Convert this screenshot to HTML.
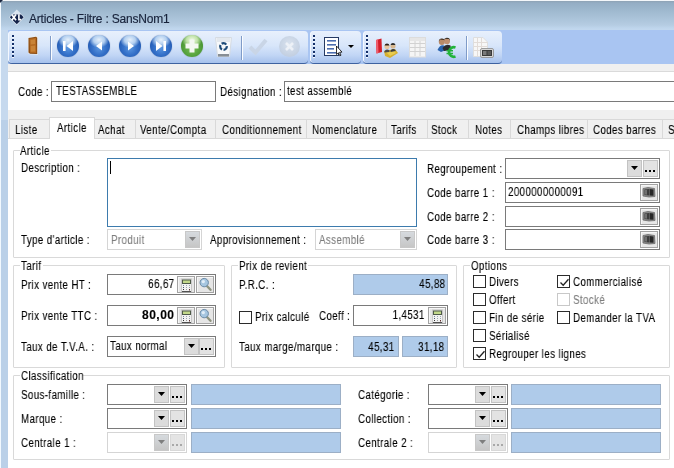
<!DOCTYPE html><html><head><meta charset="utf-8"><style>
*{box-sizing:border-box;margin:0;padding:0}
html,body{width:674px;height:468px;overflow:hidden;background:#f0f0f0;font-family:"Liberation Sans",sans-serif;font-size:12px;color:#000}
.a{position:absolute}
.t{position:absolute;line-height:14px;white-space:nowrap;transform:scaleX(.81);letter-spacing:.5px;transform-origin:0 0;will-change:transform;-webkit-text-stroke:0.12px currentColor}
.tr{transform-origin:100% 0}
.tc{transform-origin:50% 0}
.grp{position:absolute;top:31px;height:33px;border-radius:4px;background:linear-gradient(#e8f0fc 0%,#d8e6fa 45%,#c2d6f5 75%,#a6c1ec 100%);border-bottom:1px solid #3e62a0;box-shadow:inset 1px 0 0 #f4f8ff}
.grip{position:absolute;top:4px;width:2px;height:23px;background:repeating-linear-gradient(#14306a 0 2px,#f4f8ff 2px 3px,transparent 3px 4px)}
.sep{position:absolute;top:5px;width:2px;height:24px;border-left:1px solid #7f9bc8;border-right:1px solid #fbfdff}
.circ{position:absolute;top:4px;width:22px;height:22px;border-radius:50%;background:radial-gradient(ellipse 62% 48% at 50% 22%,#e6f0fb 0%,#b4d0f0 40%,rgba(120,170,230,0) 75%),radial-gradient(circle at 50% 60%,#5a96e0 0%,#3470c8 40%,#2057b0 75%,#1a4490 100%);box-shadow:0 0 1px rgba(20,50,110,.5)}
.circ svg{position:absolute;left:0;top:0}
.inp{position:absolute;background:#fff;border:1px solid #7a7a7a}
.tab{position:absolute;top:119px;height:19px;background:#f0f0f0;border:1px solid #d9d9d9;border-bottom:none}
.gb{position:absolute;border:1px solid #d9d9d9;border-radius:1px}
.gl{position:absolute;background:#fff;height:14px}
.blue{position:absolute;background:#afcbea;border:1px solid #9cafc6}
.ddb{position:absolute;background:#dcdcdc;border:1px solid #c3c3c3;width:15px;height:17px}
.ddb::after{content:"";position:absolute;left:3px;top:5px;width:7px;height:4px;background:#000;clip-path:polygon(0 0,100% 0,50% 100%)}
.dots{position:absolute;background:#e3e3e3;border:1px solid #c3c3c3;width:15px;height:17px}
.dots::after{content:"";position:absolute;left:1px;top:9px;width:2px;height:2px;background:#000;box-shadow:4px 0 #000,8px 0 #000}
.dis .ddb{background:linear-gradient(#d6dade,#c6c6c6);border-color:#c8c8c8}
.dis .ddb::after{background:#7e7e7e}
.dis .dots{background:#e4e4e4;border-color:#d8d8d8}
.dis .dots::after{background:#a8a8a8;box-shadow:4px 0 #a8a8a8,8px 0 #a8a8a8}
.cb{position:absolute;width:13px;height:13px;border:1px solid #2b2b2b;background:#fff}
.gray{color:#7d7d7d}
.btn{position:absolute;background:#e6e6e6;border:1px solid #a3a3a3;width:18px;height:17px;box-shadow:inset 1px 1px 0 #f6f6f6}
</style></head><body>
<div class="a" style="left:0;top:0;width:8px;height:468px;background:linear-gradient(#c6d9ee 0,#c6d9ee 120px,#bad0e8 120px);border-left:1px solid #f2f9ff"></div>
<div class="a" style="left:0;top:0;width:674px;height:30px;background:linear-gradient(#8fa2b4 0px,#94adc4 2px,#a2bcd2 12px,#b5cce2 24px,#bed5ec 27px,#c4d9ef 30px);border-top:1px solid #f4f7fa;border-left:1px solid #f2f9ff"></div>
<div class="a" style="left:0;top:0;width:3px;height:3px;background:linear-gradient(135deg,#1a2540 40%,transparent 60%)"></div>
<svg class="a" style="left:8px;top:9px" width="17" height="17" viewBox="0 0 17 17">
<path d="M8.8 0.5 L16.5 8.3 L8.8 16.3 L1 8.3Z" fill="#eef3fa" opacity=".75"/>
<path d="M1.8 8.3 L4.5 5.5 L13 5.5 L15.6 8.3 L8.8 15.2Z" fill="#14234a"/>
<path d="M3.8 5.6 L8 11.2 M8 5.6 L3.8 11.2" stroke="#fff" stroke-width="1.7"/>
<path d="M10.9 5.2 V10.6 H13.2" stroke="#fff" stroke-width="1.6" fill="none"/>
</svg>
<div class="a" style="left:29px;top:12px;line-height:14px;font-size:12px;letter-spacing:-0.2px;color:#17223a;white-space:nowrap;will-change:transform;-webkit-text-stroke:0.15px #17223a">Articles - Filtre : SansNom1</div>
<div class="a" style="left:8px;top:30px;width:666px;height:34px;background:#a9c5f2"></div>
<div class="grp" style="left:8px;width:300px">
<div class="grip" style="left:4px"></div>
<svg class="a" style="left:19px;top:4px" width="12" height="22" viewBox="0 0 12 22">
<path d="M1 2.5 L9.5 1 L11 2 L11 20 L3 19.5 L1 18Z" fill="#f4f0e8" opacity=".6"/>
<path d="M1.5 3 L9 1.8 L10.2 2.8 L10.2 19 L3 18.8 L1.5 17.5Z" fill="#8a4c14"/>
<path d="M2.5 3.8 L9 2.8 L9.3 18 L3 17.8Z" fill="#b56a22"/>
<path d="M3.5 5 L8 4.3 L8.2 9 L3.7 9.5Z M3.7 11 L8.2 10.5 L8.3 16.5 L3.8 16.7Z" fill="#c98438"/>
</svg>
<div class="sep" style="left:42px"></div>
<div class="circ" style="left:49px"><svg width="22" height="22"><rect x="6" y="6" width="2.6" height="10" fill="#fff"/><path d="M16 6 L16 16 L9.5 11Z" fill="#fff"/></svg></div>
<div class="circ" style="left:80px"><svg width="22" height="22"><path d="M14 6.5 L14 15.5 L8 11Z" fill="#fff"/></svg></div>
<div class="circ" style="left:111px"><svg width="22" height="22"><path d="M9 6.5 L9 15.5 L15 11Z" fill="#fff"/></svg></div>
<div class="circ" style="left:142px"><svg width="22" height="22"><path d="M6 6 L6 16 L12.5 11Z" fill="#fff"/><rect x="13.4" y="6" width="2.6" height="10" fill="#fff"/></svg></div>
<div class="circ" style="left:173px;background:radial-gradient(ellipse 62% 48% at 50% 22%,#eef8e6 0%,#c0e2a8 40%,rgba(140,200,100,0) 75%),radial-gradient(circle at 50% 60%,#7cc058 0%,#5aa640 40%,#44902f 75%,#357626 100%);box-shadow:0 0 1px rgba(30,80,20,.5)"><svg width="22" height="22"><path d="M8.5 4.5 H13.5 V8.5 H17.5 V13.5 H13.5 V17.5 H8.5 V13.5 H4.5 V8.5 H8.5Z" fill="#f4f7f2"/></svg></div>
<svg class="a" style="left:206px;top:5px" width="19" height="22" viewBox="0 0 19 22">
<path d="M1.5 1.5 H17.5 L15.5 20.5 H3.5Z" fill="#f7f9fb" stroke="#d5dbe2"/>
<path d="M2.5 2 H16.5 L16 6 H3Z" fill="#e3e8ee"/>
<circle cx="9.5" cy="10.5" r="3.3" fill="none" stroke="#1d4a78" stroke-width="2.2" stroke-dasharray="5 1.6"/>
<rect x="4" y="18" width="11" height="2.5" fill="#6a737c" opacity=".8"/>
</svg>
<div class="sep" style="left:233px"></div>
<svg class="a" style="left:240px;top:6px" width="20" height="20" viewBox="0 0 20 20"><path d="M2 10 L7.5 15.5 L18 3" fill="none" stroke="#c9d5e6" stroke-width="4"/></svg>
<div class="a" style="left:271px;top:5px;width:21px;height:21px;border-radius:50%;background:radial-gradient(circle at 50% 40%,#dae3ef,#bac8dc)"><svg width="21" height="21"><path d="M7 7 L14 14 M14 7 L7 14" stroke="#edf1f7" stroke-width="2.6"/></svg></div>
</div>
<div class="grp" style="left:310px;width:51px">
<div class="grip" style="left:3px"></div>
<svg class="a" style="left:13px;top:5px" width="22" height="22" viewBox="0 0 22 22">
<rect x="1.5" y="1.5" width="14" height="18" fill="#fff" stroke="#263a63"/>
<rect x="4" y="4" width="9" height="1.6" fill="#4c6eb0"/><rect x="4" y="8" width="9" height="1.6" fill="#4c6eb0"/>
<rect x="4" y="12" width="7" height="1.6" fill="#4c6eb0"/><rect x="4" y="16" width="9" height="1.6" fill="#4c6eb0"/>
<path d="M13.5 10 L13.5 18.5 L15.4 16.8 L16.8 19.8 L18 19.2 L16.6 16.3 L19 16.1Z" fill="#fff" stroke="#000" stroke-width=".8"/>
</svg>
<div class="a" style="left:38px;top:14px;border-left:3px solid transparent;border-right:3px solid transparent;border-top:3px solid #000"></div>
</div>
<div class="grp" style="left:363px;width:139px">
<div class="grip" style="left:3px"></div>
<svg class="a" style="left:11px;top:6px" width="24" height="22" viewBox="0 0 24 22">
<path d="M2 3 L7.5 1.5 L8 15 L2.5 16.5Z" fill="#d41e2a"/><path d="M2 3 L4 2.5 L4.5 16 L2.5 16.5Z" fill="#f06070"/>
<path d="M10 14 L21 12 L24 16 L16 21 L11 19Z" fill="#d6b030"/><path d="M12 15 L20 13.5 L22 16 L16 19Z" fill="#e8cc50"/>
<circle cx="13" cy="9.5" r="2.6" fill="#e6c6a0"/><path d="M10.5 8.5 A2.6 2.6 0 0 1 15.5 8.5Z" fill="#2e2018"/>
<circle cx="19" cy="9" r="2.6" fill="#d8b890"/><path d="M16.5 8 A2.6 2.6 0 0 1 21.5 8Z" fill="#2a2a2a"/>
<path d="M10.5 14 Q13 11.5 15.5 13.5 L15.5 15 L10.5 15.5Z" fill="#4a4a4a"/><path d="M16.5 13.5 Q19 11 21.5 13 L21.5 14 L16.5 15Z" fill="#3a3a3a"/>
</svg>
<svg class="a" style="left:45px;top:6px" width="19" height="21" viewBox="0 0 19 21"><rect x="1.5" y="0.5" width="16" height="19.5" fill="#f5f5f5" stroke="#dcdcdc"/><path d="M7 2 V19 M12 2 V19 M2 6.5 H17 M2 10.5 H17 M2 14.5 H17" stroke="#d2d2d2"/><rect x="2" y="1" width="15" height="3" fill="#e6e6e6"/></svg>
<svg class="a" style="left:72px;top:4px" width="24" height="26" viewBox="0 0 24 26">
<path d="M2.5 15 Q5 9 9 10.5 L11 15 L6 17Z" fill="#2a64b0"/>
<path d="M7.5 13 Q11 8 15.5 10.5 L16 15 L9 16Z" fill="#2c2c2c"/>
<circle cx="6.8" cy="7" r="3" fill="#b88a68"/><path d="M3.8 6.5 A3 3 0 0 1 9.8 6.5 L9 5 L5 4.5Z" fill="#3a2818"/>
<circle cx="12" cy="6.3" r="3" fill="#c09070"/><path d="M9 5.8 A3 3 0 0 1 15 5.8 L14 4 L10 3.8Z" fill="#2a2018"/>
<path d="M20.5 12.5 A4.8 4.8 0 1 0 20.5 21.5" fill="none" stroke="#22b33a" stroke-width="2.6"/>
<path d="M11.5 15.8 H18 M11.5 18.5 H18" stroke="#22b33a" stroke-width="1.5"/>
</svg>
<div class="sep" style="left:103px"></div>
<svg class="a" style="left:109px;top:5px" width="24" height="23" viewBox="0 0 24 23">
<path d="M1.5 1.5 H11 L15.5 6 V20.5 H1.5Z" fill="#f7f7f7" stroke="#dedede"/>
<path d="M2 6.5 H15 M2 10.5 H15 M2 14.5 H15 M5.5 2 V20 M9.5 2 V20" stroke="#e2dcd8"/>
<rect x="8.5" y="12.5" width="13" height="9" rx="1.5" fill="#d8d8d8" stroke="#8a8a8a" stroke-width=".8"/>
<rect x="10" y="14" width="10" height="6" fill="#3a3a3a"/><rect x="11" y="15" width="3.5" height="4" fill="#7a7a7a"/><rect x="15.5" y="15" width="3.5" height="4" fill="#5a5a5a"/>
</svg>
</div>
<div class="a" style="left:8px;top:64px;width:666px;height:8px;background:#f0f0f0;border-bottom:1px solid #dadada"></div>
<div class="a" style="left:8px;top:72px;width:666px;height:38px;background:#fff"></div>
<div class="t " style="left:18px;top:85px;">Code :</div>
<div class="inp" style="left:51px;top:81px;width:165px;height:21px"></div>
<div class="t " style="left:56px;top:84px;">TESTASSEMBLE</div>
<div class="t " style="left:220px;top:85px;">Désignation :</div>
<div class="inp" style="left:284px;top:81px;width:400px;height:21px"></div>
<div class="t " style="left:287px;top:84px;">test assemblé</div>
<div class="a" style="left:8px;top:110px;width:666px;height:30px;background:#f0f0f0"></div>
<div class="a" style="left:8px;top:138px;width:666px;height:330px;background:#fff;border-top:1px solid #d9d9d9"></div>
<div class="tab" style="left:9px;width:41px"></div>
<div class="t " style="left:15px;top:123px;">Liste</div>
<div class="tab" style="left:94px;width:42px"></div>
<div class="t " style="left:98px;top:123px;">Achat</div>
<div class="tab" style="left:135px;width:81px"></div>
<div class="t " style="left:140px;top:123px;">Vente/Compta</div>
<div class="tab" style="left:215px;width:92px"></div>
<div class="t " style="left:222px;top:123px;">Conditionnement</div>
<div class="tab" style="left:306px;width:81px"></div>
<div class="t " style="left:312px;top:123px;">Nomenclature</div>
<div class="tab" style="left:386px;width:42px"></div>
<div class="t " style="left:391px;top:123px;">Tarifs</div>
<div class="tab" style="left:427px;width:42px"></div>
<div class="t " style="left:431px;top:123px;">Stock</div>
<div class="tab" style="left:468px;width:43px"></div>
<div class="t " style="left:475px;top:123px;">Notes</div>
<div class="tab" style="left:510px;width:78px"></div>
<div class="t " style="left:517px;top:123px;">Champs libres</div>
<div class="tab" style="left:587px;width:76px"></div>
<div class="t " style="left:593px;top:123px;">Codes barres</div>
<div class="tab" style="left:662px;width:59px"></div>
<div class="t " style="left:668px;top:123px;">S</div>
<div class="a" style="left:49px;top:117px;width:46px;height:22px;background:#fff;border:1px solid #d9d9d9;border-bottom:none"></div>
<div class="t " style="left:57px;top:121px;">Article</div>
<div class="a" style="left:8px;top:139px;width:666px;height:329px;background:#fff"></div>
<div class="gb" style="left:13px;top:150px;width:657px;height:108px"></div>
<div class="gl" style="left:20px;top:144px;width:31px"></div>
<div class="t " style="left:20px;top:144px;">Article</div>
<div class="t " style="left:21px;top:161px;">Description :</div>
<div class="a" style="left:107px;top:158px;width:310px;height:69px;border:1px solid #3d7bad;background:#fff"></div>
<div class="a" style="left:110px;top:161px;width:1px;height:13px;background:#000"></div>
<div class="t " style="left:21px;top:233px;">Type d'article :</div>
<div class="a dis" style="left:107px;top:229px;width:95px;height:21px;border:1px solid #d5d5d5;background:#fff"><div class="ddb" style="left:77px;top:1px"></div></div>
<div class="t gray" style="left:111px;top:233px;">Produit</div>
<div class="t " style="left:210px;top:233px;">Approvisionnement :</div>
<div class="a dis" style="left:315px;top:229px;width:102px;height:21px;border:1px solid #d5d5d5;background:#fff"><div class="ddb" style="left:84px;top:1px"></div></div>
<div class="t gray" style="left:319px;top:233px;">Assemblé</div>
<div class="t " style="left:427px;top:162px;">Regroupement :</div>
<div class="inp" style="left:505px;top:158px;width:155px;height:21px"><div class="ddb" style="left:121px;top:1px"></div><div class="dots" style="left:137px;top:1px"></div></div>
<div class="t " style="left:427px;top:186px;">Code barre 1 :</div>
<div class="inp" style="left:505px;top:182px;width:155px;height:21px"><div class="btn" style="left:134px;top:1px"></div></div>
<svg class="a" style="left:642px;top:186px" width="14" height="12" viewBox="0 0 14 12"><path d="M1 2.5 L6 1.5 L12.5 2.5 L13 10.5 L7 11 L1 10Z" fill="#8a8a8a" stroke="#6a6a6a" stroke-width=".8"/><path d="M2.5 3.5 L7 3 L7 9.5 L2.5 9Z" fill="#3c3c3c"/><path d="M3 4 L5 3.8 L5 8.8 L3 8.6Z" fill="#707070"/><path d="M7.5 3 L11.5 3.5 L11.5 9.8 L7.5 9.5Z" fill="#262626"/></svg>
<div class="t " style="left:508px;top:185px;">2000000000091</div>
<div class="t " style="left:427px;top:210px;">Code barre 2 :</div>
<div class="inp" style="left:505px;top:206px;width:155px;height:21px"><div class="btn" style="left:134px;top:1px"></div></div>
<svg class="a" style="left:642px;top:210px" width="14" height="12" viewBox="0 0 14 12"><path d="M1 2.5 L6 1.5 L12.5 2.5 L13 10.5 L7 11 L1 10Z" fill="#8a8a8a" stroke="#6a6a6a" stroke-width=".8"/><path d="M2.5 3.5 L7 3 L7 9.5 L2.5 9Z" fill="#3c3c3c"/><path d="M3 4 L5 3.8 L5 8.8 L3 8.6Z" fill="#707070"/><path d="M7.5 3 L11.5 3.5 L11.5 9.8 L7.5 9.5Z" fill="#262626"/></svg>
<div class="t " style="left:427px;top:233px;">Code barre 3 :</div>
<div class="inp" style="left:505px;top:229px;width:155px;height:21px"><div class="btn" style="left:134px;top:1px"></div></div>
<svg class="a" style="left:642px;top:233px" width="14" height="12" viewBox="0 0 14 12"><path d="M1 2.5 L6 1.5 L12.5 2.5 L13 10.5 L7 11 L1 10Z" fill="#8a8a8a" stroke="#6a6a6a" stroke-width=".8"/><path d="M2.5 3.5 L7 3 L7 9.5 L2.5 9Z" fill="#3c3c3c"/><path d="M3 4 L5 3.8 L5 8.8 L3 8.6Z" fill="#707070"/><path d="M7.5 3 L11.5 3.5 L11.5 9.8 L7.5 9.5Z" fill="#262626"/></svg>
<div class="gb" style="left:13px;top:265px;width:212px;height:103px"></div>
<div class="gl" style="left:20px;top:259px;width:23px"></div>
<div class="t " style="left:21px;top:259px;">Tarif</div>
<div class="t " style="left:21px;top:278px;">Prix vente HT :</div>
<div class="inp" style="left:107px;top:274px;width:109px;height:21px"><div class="btn" style="left:69px;top:1px"><svg class="a" style="left:3px;top:1px" width="11" height="14" viewBox="0 0 11 14"><rect x="0" y="0.5" width="11" height="13.5" fill="#c8c8c8"/><rect x="1" y="1.5" width="9" height="11.5" fill="#f2f2f2"/><rect x="1" y="1.5" width="9" height="4.5" fill="#4e5a48"/><rect x="2" y="2.5" width="7" height="2.5" fill="#c2d88a"/><rect x="2" y="7" width="1" height="1" fill="#7a8a9a"/><rect x="5" y="7" width="1" height="1" fill="#9aa4ae"/><rect x="8" y="7" width="1" height="1" fill="#9aa4ae"/><rect x="2" y="9" width="1" height="1" fill="#4a5a70"/><rect x="5" y="9" width="1" height="1" fill="#9aa4ae"/><rect x="8" y="9" width="1" height="1" fill="#9aa4ae"/><rect x="2" y="11" width="1" height="1" fill="#303030"/><rect x="5" y="11" width="1" height="1" fill="#9a9a9a"/><rect x="8" y="11" width="1" height="1.5" fill="#603030"/><rect x="1" y="13" width="9" height="1" fill="#505050"/></svg></div><div class="btn" style="left:88px;top:1px"><svg class="a" style="left:0px;top:0px" width="16" height="15" viewBox="0 0 16 15"><path d="M9.5 8.5 L13.5 12.8" stroke="#8f9480" stroke-width="2.4" stroke-linecap="round"/><circle cx="7.2" cy="5.6" r="4.2" fill="#a6c6e0" stroke="#6a8aa6" stroke-width="1"/><circle cx="6.3" cy="4.6" r="1.7" fill="#e2eef8"/></svg></div></div>
<div class="t tr " style="right:499px;top:277px;">66,67</div>
<div class="t " style="left:21px;top:309px;">Prix vente TTC :</div>
<div class="inp" style="left:107px;top:305px;width:109px;height:21px"><div class="btn" style="left:69px;top:1px"><svg class="a" style="left:3px;top:1px" width="11" height="14" viewBox="0 0 11 14"><rect x="0" y="0.5" width="11" height="13.5" fill="#c8c8c8"/><rect x="1" y="1.5" width="9" height="11.5" fill="#f2f2f2"/><rect x="1" y="1.5" width="9" height="4.5" fill="#4e5a48"/><rect x="2" y="2.5" width="7" height="2.5" fill="#c2d88a"/><rect x="2" y="7" width="1" height="1" fill="#7a8a9a"/><rect x="5" y="7" width="1" height="1" fill="#9aa4ae"/><rect x="8" y="7" width="1" height="1" fill="#9aa4ae"/><rect x="2" y="9" width="1" height="1" fill="#4a5a70"/><rect x="5" y="9" width="1" height="1" fill="#9aa4ae"/><rect x="8" y="9" width="1" height="1" fill="#9aa4ae"/><rect x="2" y="11" width="1" height="1" fill="#303030"/><rect x="5" y="11" width="1" height="1" fill="#9a9a9a"/><rect x="8" y="11" width="1" height="1.5" fill="#603030"/><rect x="1" y="13" width="9" height="1" fill="#505050"/></svg></div><div class="btn" style="left:88px;top:1px"><svg class="a" style="left:0px;top:0px" width="16" height="15" viewBox="0 0 16 15"><path d="M9.5 8.5 L13.5 12.8" stroke="#8f9480" stroke-width="2.4" stroke-linecap="round"/><circle cx="7.2" cy="5.6" r="4.2" fill="#a6c6e0" stroke="#6a8aa6" stroke-width="1"/><circle cx="6.3" cy="4.6" r="1.7" fill="#e2eef8"/></svg></div></div>
<div class="t tr " style="right:499px;top:308px;font-weight:bold;transform:none">80,00</div>
<div class="t " style="left:21px;top:340px;">Taux de T.V.A. :</div>
<div class="inp" style="left:107px;top:336px;width:109px;height:21px"><div class="ddb" style="left:76px;top:1px"></div><div class="dots" style="left:91px;top:1px"></div></div>
<div class="t " style="left:110px;top:339px;">Taux normal</div>
<div class="gb" style="left:231px;top:265px;width:226px;height:103px"></div>
<div class="gl" style="left:238px;top:259px;width:70px"></div>
<div class="t " style="left:239px;top:259px;">Prix de revient</div>
<div class="t " style="left:239px;top:278px;">P.R.C. :</div>
<div class="blue" style="left:353px;top:274px;width:95px;height:21px"></div>
<div class="t tr " style="right:228px;top:277px;">45,88</div>
<div class="cb" style="left:239px;top:311px"></div>
<div class="t " style="left:255px;top:310px;">Prix calculé</div>
<div class="t " style="left:319px;top:309px;">Coeff :</div>
<div class="inp" style="left:353px;top:305px;width:95px;height:21px"><div class="btn" style="left:74px;top:1px"><svg class="a" style="left:3px;top:1px" width="11" height="14" viewBox="0 0 11 14"><rect x="0" y="0.5" width="11" height="13.5" fill="#c8c8c8"/><rect x="1" y="1.5" width="9" height="11.5" fill="#f2f2f2"/><rect x="1" y="1.5" width="9" height="4.5" fill="#4e5a48"/><rect x="2" y="2.5" width="7" height="2.5" fill="#c2d88a"/><rect x="2" y="7" width="1" height="1" fill="#7a8a9a"/><rect x="5" y="7" width="1" height="1" fill="#9aa4ae"/><rect x="8" y="7" width="1" height="1" fill="#9aa4ae"/><rect x="2" y="9" width="1" height="1" fill="#4a5a70"/><rect x="5" y="9" width="1" height="1" fill="#9aa4ae"/><rect x="8" y="9" width="1" height="1" fill="#9aa4ae"/><rect x="2" y="11" width="1" height="1" fill="#303030"/><rect x="5" y="11" width="1" height="1" fill="#9a9a9a"/><rect x="8" y="11" width="1" height="1.5" fill="#603030"/><rect x="1" y="13" width="9" height="1" fill="#505050"/></svg></div></div>
<div class="t tr " style="right:249px;top:308px;">1,4531</div>
<div class="t " style="left:239px;top:340px;">Taux marge/marque :</div>
<div class="blue" style="left:353px;top:336px;width:46px;height:21px"></div>
<div class="blue" style="left:402px;top:336px;width:46px;height:21px"></div>
<div class="t tr " style="right:279px;top:340px;">45,31</div>
<div class="t tr " style="right:229px;top:340px;">31,18</div>
<div class="gb" style="left:463px;top:265px;width:207px;height:103px"></div>
<div class="gl" style="left:470px;top:259px;width:39px"></div>
<div class="t " style="left:471px;top:259px;">Options</div>
<div class="cb" style="left:473px;top:275px"></div>
<div class="t " style="left:489px;top:275px;">Divers</div>
<div class="cb" style="left:473px;top:293px"></div>
<div class="t " style="left:489px;top:293px;">Offert</div>
<div class="cb" style="left:473px;top:311px"></div>
<div class="t " style="left:489px;top:311px;">Fin de série</div>
<div class="cb" style="left:473px;top:329px"></div>
<div class="t " style="left:489px;top:329px;">Sérialisé</div>
<div class="cb" style="left:473px;top:347px"><svg class="a" style="left:1px;top:1px" width="11" height="11" viewBox="0 0 11 11"><path d="M1.5 5.5 L4.2 8.3 L9.5 2.2" fill="none" stroke="#222" stroke-width="1.3"/></svg></div>
<div class="t " style="left:489px;top:347px;">Regrouper les lignes</div>
<div class="cb" style="left:557px;top:275px;"><svg class="a" style="left:1px;top:1px" width="11" height="11" viewBox="0 0 11 11"><path d="M1.5 5.5 L4.2 8.3 L9.5 2.2" fill="none" stroke="#222" stroke-width="1.3"/></svg></div>
<div class="t " style="left:573px;top:275px;">Commercialisé</div>
<div class="cb" style="left:557px;top:293px;border-color:#c8c8c8"></div>
<div class="t gray" style="left:573px;top:293px;">Stocké</div>
<div class="cb" style="left:557px;top:311px;"></div>
<div class="t " style="left:573px;top:311px;">Demander la TVA</div>
<div class="gb" style="left:13px;top:375px;width:657px;height:85px"></div>
<div class="gl" style="left:20px;top:369px;width:62px"></div>
<div class="t " style="left:21px;top:369px;">Classification</div>
<div class="t " style="left:21px;top:388px;">Sous-famille :</div>
<div class="t " style="left:358px;top:388px;">Catégorie :</div>
<div class="inp" style="left:107px;top:384px;width:80px;height:21px;"><div class="ddb" style="left:46px;top:1px"></div><div class="dots" style="left:62px;top:1px"></div></div>
<div class="inp" style="left:428px;top:384px;width:80px;height:21px;"><div class="ddb" style="left:46px;top:1px"></div><div class="dots" style="left:62px;top:1px"></div></div>
<div class="blue" style="left:191px;top:384px;width:150px;height:21px"></div>
<div class="blue" style="left:511px;top:384px;width:150px;height:21px"></div>
<div class="t " style="left:21px;top:412px;">Marque :</div>
<div class="t " style="left:358px;top:412px;">Collection :</div>
<div class="inp" style="left:107px;top:408px;width:80px;height:21px;"><div class="ddb" style="left:46px;top:1px"></div><div class="dots" style="left:62px;top:1px"></div></div>
<div class="inp" style="left:428px;top:408px;width:80px;height:21px;"><div class="ddb" style="left:46px;top:1px"></div><div class="dots" style="left:62px;top:1px"></div></div>
<div class="blue" style="left:191px;top:408px;width:150px;height:21px"></div>
<div class="blue" style="left:511px;top:408px;width:150px;height:21px"></div>
<div class="t " style="left:21px;top:436px;">Centrale 1 :</div>
<div class="t " style="left:358px;top:436px;">Centrale 2 :</div>
<div class="inp dis" style="left:107px;top:432px;width:80px;height:21px;border-color:#d5d5d5"><div class="ddb" style="left:46px;top:1px"></div><div class="dots" style="left:62px;top:1px"></div></div>
<div class="inp dis" style="left:428px;top:432px;width:80px;height:21px;border-color:#d5d5d5"><div class="ddb" style="left:46px;top:1px"></div><div class="dots" style="left:62px;top:1px"></div></div>
<div class="blue" style="left:191px;top:432px;width:150px;height:21px"></div>
<div class="blue" style="left:511px;top:432px;width:150px;height:21px"></div>
</body></html>
